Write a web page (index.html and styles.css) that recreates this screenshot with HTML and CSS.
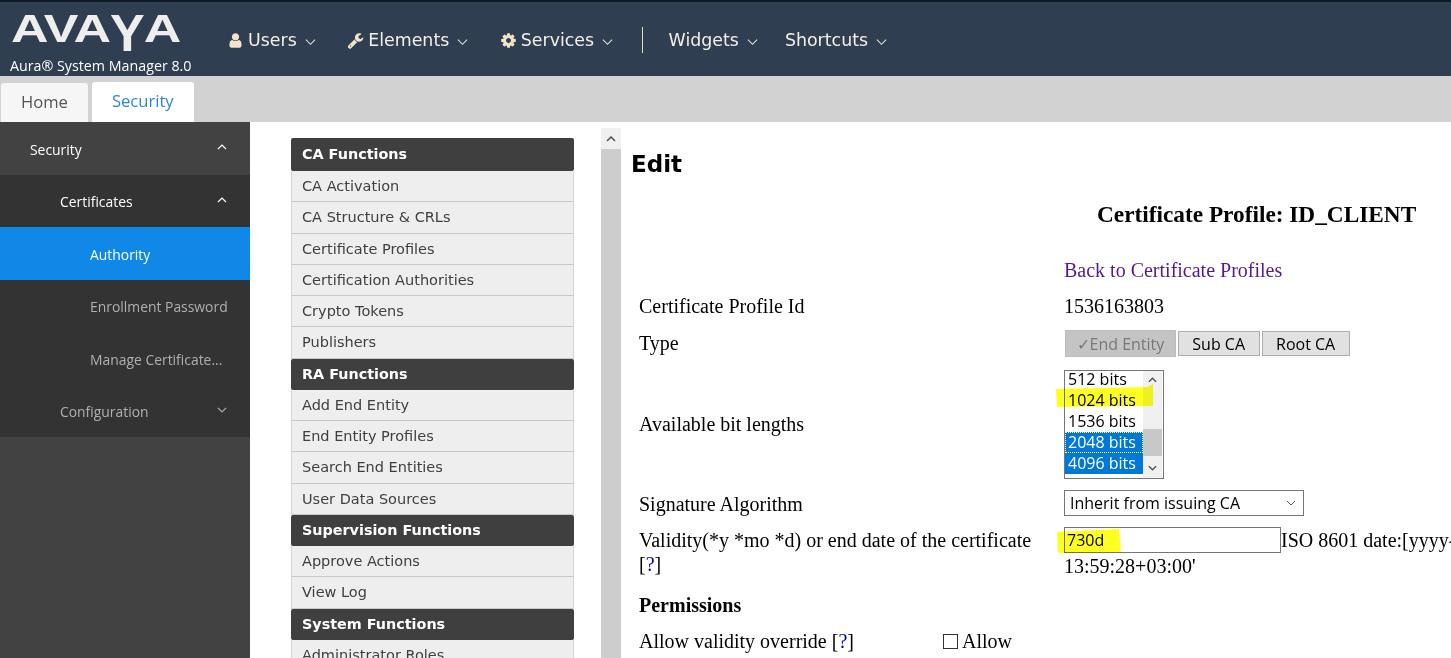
FILE: index.html
```html
<!DOCTYPE html>
<html lang="en">
<head>
  <meta charset="UTF-8">
  <title>Aura System Manager 8.0</title>
  <link rel="stylesheet" href="styles.css">
</head>
<body>
  <header class="topbar">
    <div class="brand">
      <div class="logo">AVA<span class="logo-y">Y</span>A</div>
      <div class="product">Aura® System Manager 8.0</div>
    </div>
    <nav class="nav">
      <a class="nav-item">
        <svg class="nav-icon" viewBox="0 0 1792 1792"><path d="M1536 1399q0 109-62.5 187t-150.5 78h-854q-88 0-150.5-78t-62.5-187q0-85 8.5-160.5t31.5-152 58.5-131 94-89 134.5-34.5q131 128 313 128t313-128q76 0 134.5 34.5t94 89 58.5 131 31.5 152 8.5 160.5zm-256-887q0 159-112.5 271.5t-271.5 112.5-271.5-112.5-112.5-271.5 112.5-271.5 271.5-112.5 271.5 112.5 112.5 271.5z"/></svg>
        Users
        <svg class="caret" viewBox="0 0 12 8"><path d="M1 1.5l5 5 5-5"/></svg>
      </a>
      <a class="nav-item">
        <svg class="nav-icon" viewBox="0 0 1792 1792"><path d="M448 1472q0-26-19-45t-45-19-45 19-19 45 19 45 45 19 45-19 19-45zm644-420l-682 682q-37 37-90 37-52 0-91-37l-106-108q-38-36-38-90 0-53 38-91l681-681q39 98 114.5 173.5t173.5 114.5zm634-435q0 39-23 106-47 134-164.5 217.5t-258.5 83.5q-185 0-316.5-131.5t-131.5-316.5 131.5-316.5 316.5-131.5q58 0 121.5 16.5t107.5 46.5q16 11 16 28t-16 28l-293 169v224l193 107q5-3 79-48.5t135.5-81 70.5-35.5q15 0 23.5 10t8.5 25z"/></svg>
        Elements
        <svg class="caret" viewBox="0 0 12 8"><path d="M1 1.5l5 5 5-5"/></svg>
      </a>
      <a class="nav-item">
        <svg class="nav-icon" viewBox="0 0 1792 1792"><path d="M1152 896q0-106-75-181t-181-75-181 75-75 181 75 181 181 75 181-75 75-181zm512-109v222q0 12-8 23t-20 13l-185 28q-19 54-39 91 35 50 107 138 10 12 10 25t-9 23q-27 37-99 108t-94 71q-12 0-26-9l-138-108q-44 23-91 38-16 136-29 186-7 28-36 28h-222q-14 0-24.5-8.5t-11.5-21.5l-28-184q-49-16-90-37l-141 107q-10 9-25 9-14 0-25-11-126-114-165-168-7-10-7-23 0-12 8-23 15-21 51-66.5t54-70.5q-27-50-41-99l-183-27q-13-2-21-12.5t-8-23.5v-222q0-12 8-23t19-13l186-28q14-46 39-92-40-57-107-138-10-12-10-24 0-10 9-23 26-36 98.5-107.5t94.5-71.5q13 0 26 10l138 107q44-23 91-38 16-136 29-186 7-28 36-28h222q14 0 24.5 8.5t11.5 21.5l28 184q49 16 90 37l142-107q9-9 24-9 13 0 25 10 129 119 165 170 7 8 7 22 0 12-8 23-15 21-51 66.5t-54 70.5q26 50 41 98l183 28q13 2 21 12.5t8 23.5z"/></svg>
        Services
        <svg class="caret" viewBox="0 0 12 8"><path d="M1 1.5l5 5 5-5"/></svg>
      </a>
      <span class="nav-divider"></span>
      <a class="nav-item nav-plain">
        Widgets
        <svg class="caret" viewBox="0 0 12 8"><path d="M1 1.5l5 5 5-5"/></svg>
      </a>
      <a class="nav-item nav-plain">
        Shortcuts
        <svg class="caret" viewBox="0 0 12 8"><path d="M1 1.5l5 5 5-5"/></svg>
      </a>
    </nav>
  </header>

  <div class="tabs">
    <a class="tab">Home</a>
    <a class="tab tab-active">Security</a>
  </div>

  <div class="workspace">
    <aside class="sidebar">
      <div class="side-row side-top">
        <span>Security</span>
        <svg class="side-caret" viewBox="0 0 10 6"><path d="M1 5l4-4 4 4"/></svg>
      </div>
      <div class="side-group">
        <div class="side-row side-sub side-white">
          <span>Certificates</span>
          <svg class="side-caret" viewBox="0 0 10 6"><path d="M1 5l4-4 4 4"/></svg>
        </div>
        <div class="side-row side-leaf side-current"><span>Authority</span></div>
        <div class="side-row side-leaf"><span>Enrollment Password</span></div>
        <div class="side-row side-leaf"><span>Manage Certificate...</span></div>
        <div class="side-row side-sub">
          <span>Configuration</span>
          <svg class="side-caret side-caret-dim" viewBox="0 0 10 6"><path d="M1 1l4 4 4-4"/></svg>
        </div>
      </div>
    </aside>

    <main class="main">
      <div class="menu">
        <div class="menu-head">CA Functions</div>
        <a class="menu-item">CA Activation</a>
        <a class="menu-item">CA Structure &amp; CRLs</a>
        <a class="menu-item">Certificate Profiles</a>
        <a class="menu-item">Certification Authorities</a>
        <a class="menu-item">Crypto Tokens</a>
        <a class="menu-item">Publishers</a>
        <div class="menu-head">RA Functions</div>
        <a class="menu-item">Add End Entity</a>
        <a class="menu-item">End Entity Profiles</a>
        <a class="menu-item">Search End Entities</a>
        <a class="menu-item">User Data Sources</a>
        <div class="menu-head">Supervision Functions</div>
        <a class="menu-item">Approve Actions</a>
        <a class="menu-item">View Log</a>
        <div class="menu-head">System Functions</div>
        <a class="menu-item">Administrator Roles</a>
      </div>

      <div class="scrollbar">
        <div class="scroll-arrow">
          <svg viewBox="0 0 10 6"><path d="M1 5l4-4 4 4"/></svg>
        </div>
        <div class="scroll-thumb"></div>
      </div>

      <section class="content">
        <h1 class="edit-title">Edit</h1>
        <div class="form">
          <div class="row row-title">
            <div></div>
            <h2 class="profile-title">Certificate Profile: ID_CLIENT</h2>
          </div>
          <div class="row">
            <div></div>
            <a class="back-link">Back to Certificate Profiles</a>
          </div>
          <div class="row">
            <div>Certificate Profile Id</div>
            <div>1536163803</div>
          </div>
          <div class="row row-center row-type">
            <div class="lift-label">Type</div>
            <div class="type-buttons">
              <button class="type-btn type-btn-on">✓End Entity</button>
              <button class="type-btn">Sub CA</button>
              <button class="type-btn">Root CA</button>
            </div>
          </div>
          <div class="row row-center">
            <div class="lift-label">Available bit lengths</div>
            <div class="listbox">
              <div class="list-options">
                <div class="list-option">512 bits</div>
                <div class="list-option">1024 bits</div>
                <div class="list-option">1536 bits</div>
                <div class="list-option list-selected list-focus">2048 bits</div>
                <div class="list-option list-selected">4096 bits</div>
                <div class="list-option">8192 bits</div>
              </div>
              <div class="list-scroll">
                <svg class="list-arrow" viewBox="0 0 10 6"><path d="M1 5l4-4 4 4"/></svg>
                <div class="list-thumb"></div>
                <svg class="list-arrow" viewBox="0 0 10 6"><path d="M1 1l4 4 4-4"/></svg>
              </div>
              <svg class="marker marker-bits" viewBox="0 0 98 24" preserveAspectRatio="none"><path d="M0 5L92 3 97 0 97 22 1 23Z"/></svg>
            </div>
          </div>
          <div class="row row-sig">
            <div class="sig-label">Signature Algorithm</div>
            <div class="select-box">
              <span>Inherit from issuing CA</span>
              <svg viewBox="0 0 10 6"><path d="M1 1l4 4 4-4"/></svg>
            </div>
          </div>
          <div class="row row-validity">
            <div class="validity-label">Validity(*y *mo *d) or end date of the certificate <span class="hint">[<a>?</a>]</span></div>
            <div class="validity">
              <div class="validity-line">
                <div class="validity-field">
                  <input class="text-input" type="text" value="730d">
                  <svg class="marker marker-days" viewBox="0 0 64 24" preserveAspectRatio="none"><path d="M0 3L62 0 64 23 1 24Z"/></svg>
                </div>
                <span>ISO 8601 date:[yyyy-MM-dd HH:mm:ssZZ]: '2022-01-01</span>
              </div>
              <div class="validity-more">13:59:28+03:00'</div>
            </div>
          </div>
          <div class="row row-permissions">
            <b>Permissions</b>
          </div>
          <div class="row-allow">
            <div class="allow-label">Allow validity override <span class="hint">[<a>?</a>]</span></div>
            <label class="allow-check"><input type="checkbox">Allow</label>
          </div>
        </div>
      </section>
    </main>
  </div>
</body>
</html>
```

FILE: styles.css
```css
html, body {
  margin: 0;
  padding: 0;
  height: 658px;
  overflow: hidden;
  background-color: #ffffff;
  font-family: "Open Sans", sans-serif;
}

/* top bar */
.topbar {
  display: flex;
  height: 74px;
  background-color: #2f3e50;
  border-top: 2px solid #101a26;
  color: #f3efe6;
}

.brand {
  width: 228px;
  padding-left: 10px;
  box-sizing: border-box;
  flex-shrink: 0;
}

.logo {
  height: 46px;
  margin-top: 10px;
  padding-left: 1px;
  font-family: "Liberation Sans", sans-serif;
  font-weight: bold;
  font-size: 52px;
  line-height: 46px;
  letter-spacing: -1px;
  white-space: nowrap;
  color: #eeeeee;
  transform: scaleY(0.73);
  transform-origin: left top;
}

.logo-y {
  display: inline-block;
  transform: scaleY(1.37);
  transform-origin: center 6px;
}

.product {
  margin-top: -2px;
  font-size: 14.25px;
  line-height: 20px;
  color: #ffffff;
  white-space: nowrap;
}

.nav {
  display: flex;
  align-items: center;
  height: 74px;
  padding-top: 2px;
  box-sizing: border-box;
  font-family: "DejaVu Sans", sans-serif;
  font-size: 17.4px;
}

.nav-item {
  display: flex;
  align-items: center;
  white-space: nowrap;
  margin-right: 32.5px;
}

.nav-plain {
  margin-right: 27px;
}

.nav-icon {
  width: 17px;
  height: 17px;
  margin: 0 4px 0 -1px;
  fill: #f3e3c8;
}

.caret {
  width: 11px;
  height: 8px;
  margin-left: 8px;
  margin-top: 3px;
  fill: none;
  stroke: #e6e0d4;
  stroke-width: 1.2;
}

.nav-divider {
  width: 1px;
  height: 26px;
  margin: 0 26px 0 -4px;
  background-color: #e8dcc4;
}

/* tabs */
.tabs {
  display: flex;
  align-items: flex-end;
  gap: 4px;
  height: 46px;
  padding-left: 1px;
  background-color: #d2d2d2;
  box-sizing: border-box;
}

.tab {
  height: 39px;
  padding: 0 20px;
  line-height: 37px;
  font-size: 16.6px;
  color: #555555;
  background-color: #f6f6f6;
  border-radius: 3px 3px 0 0;
}

.tab-active {
  height: 40px;
  color: #2b88d8;
  background-color: #ffffff;
}

/* left sidebar */
.workspace {
  display: flex;
  height: 536px;
}

.sidebar {
  width: 250px;
  flex-shrink: 0;
  background-color: #424242;
  font-size: 13.9px;
  color: #b0b0b0;
}

.side-group {
  background-color: #333333;
}

.side-row {
  display: flex;
  align-items: center;
  justify-content: space-between;
  height: 52.5px;
  padding-top: 2px;
  padding-right: 23px;
  box-sizing: border-box;
}

.side-top {
  padding-left: 30px;
  color: #ffffff;
}

.side-sub {
  padding-left: 60px;
}

.side-white {
  color: #ffffff;
}

.side-leaf {
  padding-left: 90px;
  padding-right: 0;
  white-space: nowrap;
}

.side-current {
  background-color: #1088e8;
  color: #ffffff;
}

.side-caret {
  width: 10px;
  height: 6px;
  margin-bottom: 4px;
  fill: none;
  stroke: #ffffff;
  stroke-width: 1.2;
}

.side-caret-dim {
  stroke: #a8a8a8;
}

/* middle menu */
.main {
  display: flex;
  flex: 1;
  min-width: 0;
}

.menu {
  width: 283px;
  flex-shrink: 0;
  margin: 16px 0 0 41px;
  font-family: "DejaVu Sans", sans-serif;
  font-size: 14.5px;
}

.menu-head {
  height: 31.25px;
  padding-left: 11px;
  line-height: 31px;
  font-size: 14.35px;
  font-weight: bold;
  color: #ffffff;
  background-color: #3f3f3f;
  border-radius: 2px;
}

.menu-head:first-child {
  height: 33px;
  line-height: 33px;
}

.menu-item {
  display: block;
  height: 30.25px;
  padding-left: 10px;
  line-height: 31px;
  color: #404040;
  background-color: #eeeeee;
  border-bottom: 1px solid #c8c8c8;
  border-left: 1px solid #d4d4d4;
  border-right: 1px solid #d4d4d4;
}

/* scrollbar of the frame */
.scrollbar {
  width: 20px;
  flex-shrink: 0;
  margin: 6px 10px 0 27px;
  display: flex;
  flex-direction: column;
}

.scroll-arrow {
  display: flex;
  align-items: center;
  justify-content: center;
  height: 21px;
  background-color: #f0f0f0;
}

.scroll-arrow svg {
  width: 10px;
  height: 6px;
  fill: none;
  stroke: #505050;
  stroke-width: 1.5;
}

.scroll-thumb {
  flex: 1;
  background-color: #cdcdcd;
}

/* form */
.content {
  flex: 1;
  min-width: 0;
  overflow: hidden;
  font-family: "Liberation Serif", serif;
  font-size: 20px;
  color: #000000;
}

.edit-title {
  margin: 27px 0 0 0;
  height: 30px;
  font-family: "DejaVu Sans", sans-serif;
  font-size: 23px;
  line-height: 30px;
  font-weight: bold;
}

.form {
  margin: 20px 0 0 8px;
  display: flex;
  flex-direction: column;
  gap: 12px;
  width: 1000px;
}

.row {
  display: grid;
  grid-template-columns: 425px 1fr;
  line-height: 24px;
}

.row-title {
  margin-bottom: 17px;
}

.row-center {
  align-items: center;
}

.row-type {
  margin-bottom: 1px;
}

.lift-label {
  padding-bottom: 2px;
}

.row-sig {
  height: 26px;
  margin-top: -1px;
  align-items: start;
}

.sig-label {
  padding-top: 1px;
  line-height: 26px;
}

.row-validity {
  margin-top: -1px;
}

.validity-label {
  padding-top: 1px;
  padding-right: 20px;
}

.validity-line {
  display: flex;
  align-items: center;
  white-space: nowrap;
  height: 26px;
}

.validity-more {
  margin-top: 1px;
}

.row-permissions {
  margin-top: 3px;
}

.row-allow {
  display: flex;
  line-height: 24px;
}

.allow-label {
  width: 304px;
  flex-shrink: 0;
}

.allow-check {
  display: flex;
  align-items: center;
}

.allow-check input {
  appearance: none;
  width: 15px;
  height: 15px;
  margin: 0 4px 0 0;
  border: 1px solid #333333;
  background-color: #ffffff;
}

.profile-title {
  margin: 0 0 0 33px;
  font-size: 23.3px;
  line-height: 30px;
  white-space: nowrap;
}

.back-link {
  color: #551a8b;
}

.hint a {
  color: #0000aa;
}

.type-buttons {
  display: flex;
  align-items: center;
  gap: 2px;
  margin-left: 1px;
}

.type-btn {
  height: 25px;
  padding: 0 13.5px;
  font-family: "Open Sans", sans-serif;
  font-size: 16px;
  color: #000000;
  background-color: #e1e1e1;
  border: 1px solid #adadad;
}

.type-btn-on {
  height: 27px;
  padding: 0 10.5px;
  color: #787878;
  background-color: #c4c4c4;
  border-color: #bdbdbd;
}

.listbox {
  position: relative;
  display: flex;
  width: 100px;
  height: 109px;
  box-sizing: border-box;
  border: 1px solid #767676;
  font-family: "Open Sans", sans-serif;
  font-size: 16px;
}

.list-options {
  flex: 1;
  height: 107px;
  overflow: hidden;
}

.list-option {
  height: 21px;
  padding-left: 3px;
  line-height: 21px;
  box-sizing: border-box;
}

.list-option:first-child {
  margin-top: -2px;
}

.list-selected {
  background-color: #0078d7;
  color: #ffffff;
}

.list-focus {
  outline: 1px dotted #ffffff;
  outline-offset: -1px;
}

.list-scroll {
  display: flex;
  flex-direction: column;
  align-items: center;
  justify-content: space-between;
  width: 19px;
  margin-right: 1px;
  background-color: #f0f0f0;
}

.list-arrow {
  width: 9px;
  height: 6px;
  margin: 6px 0 7px;
  fill: none;
  stroke: #505050;
  stroke-width: 1.5;
}

.list-thumb {
  width: 19px;
  height: 27px;
  margin-top: 35px;
  background-color: #c8c8c8;
}

.marker {
  position: absolute;
  mix-blend-mode: multiply;
  fill: #ffff20;
}

.marker-bits {
  left: -9px;
  top: 13px;
  width: 98px;
  height: 24px;
}

.marker-days {
  left: -7px;
  top: 2px;
  width: 64px;
  height: 24px;
}

.select-box {
  display: flex;
  align-items: center;
  justify-content: space-between;
  width: 240px;
  height: 26px;
  padding: 0 7px 0 5px;
  box-sizing: border-box;
  border: 1px solid #767676;
  font-family: "Open Sans", sans-serif;
  font-size: 16px;
}

.select-box svg {
  width: 10px;
  height: 6px;
  fill: none;
  stroke: #505050;
}

.validity-field {
  position: relative;
  height: 26px;
}

.text-input {
  display: block;
  width: 217px;
  height: 26px;
  padding: 0 2px;
  box-sizing: border-box;
  border: 1px solid #767676;
  font-family: "Open Sans", sans-serif;
  font-size: 16px;
  background-color: #ffffff;
}
```
